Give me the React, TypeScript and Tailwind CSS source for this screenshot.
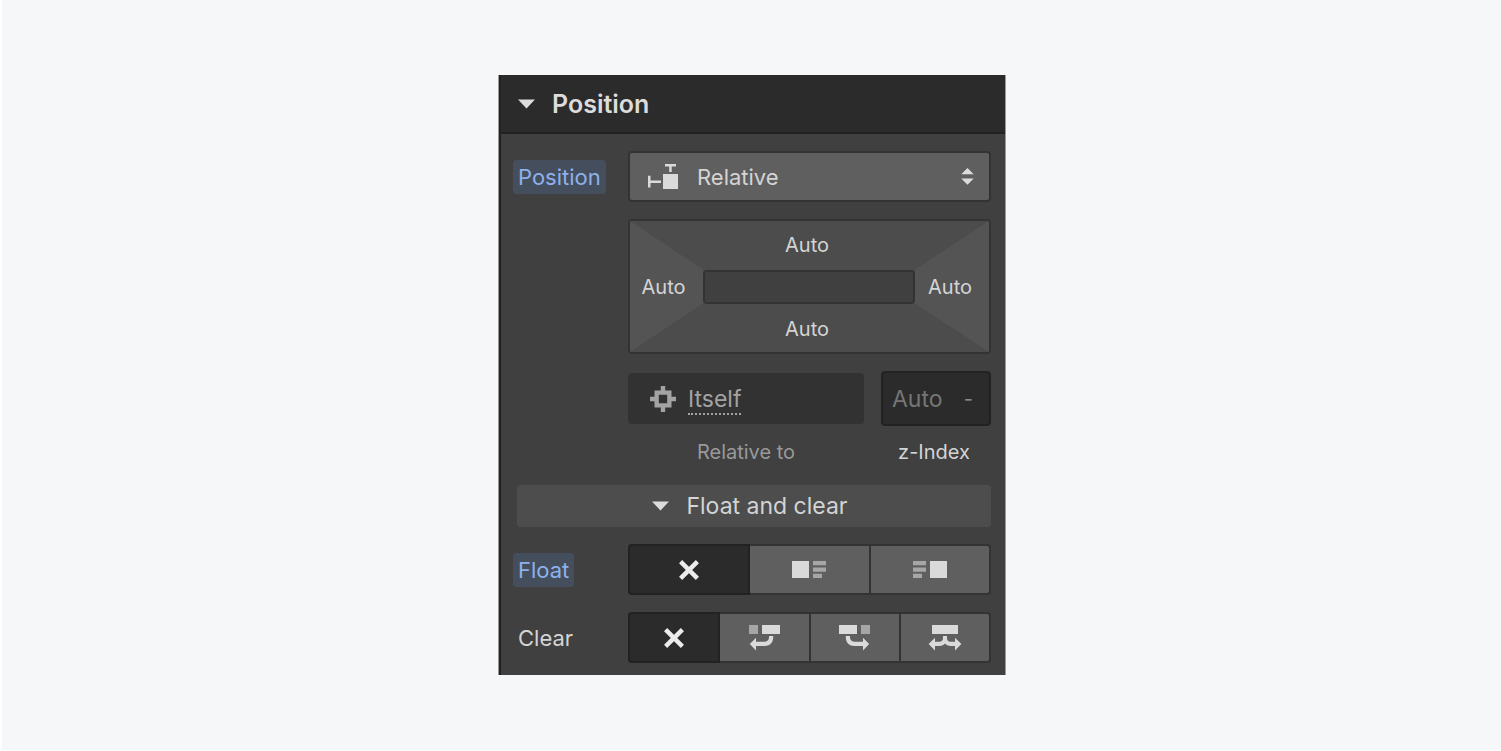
import React, { useState } from "react";

function Caret() {
  return (
    <svg width="17" height="10" viewBox="0 0 17 10" fill="#dcdcdc" aria-hidden="true">
      <path d="M0 .5h17L8.5 9.5z" />
    </svg>
  );
}

function CrossIcon() {
  return (
    <svg width="20" height="20" viewBox="0 0 20 20" fill="none" stroke="#ececec" strokeWidth="4.4" aria-hidden="true">
      <path d="M1.6 1.6 18.4 18.4M18.4 1.6 1.6 18.4" />
    </svg>
  );
}

function RelativeIcon() {
  return (
    <svg width="30" height="25" viewBox="0 0 30 25" fill="#dadada" aria-hidden="true">
      <path d="M0 11.7h2.5v4.8H13v2.4H2.5v4.5H0zM17 0h11v2.5h-4.3V8h-2.5V2.5H17zM15 10h15v15H15z" />
    </svg>
  );
}

function StepperIcon() {
  return (
    <svg width="13" height="17" viewBox="0 0 13 17" fill="#dcdcdc" aria-hidden="true">
      <path d="M.3 6.3 6.5 0l6.2 6.3zM.3 10.5h12.4L6.5 16.8z" />
    </svg>
  );
}

function TargetIcon() {
  return (
    <svg width="26" height="26" viewBox="0 0 26 26" fill="#a3a3a3" aria-hidden="true">
      <path
        fillRule="evenodd"
        d="M10.8 0h4.4v4.5h6.3v6.3H26v4.4h-4.5v6.3h-6.3V26h-4.4v-4.5H4.5v-6.3H0v-4.4h4.5V4.5h6.3zM8.8 8.8v8.4h8.4V8.8z"
      />
    </svg>
  );
}

function FloatIcon({ side }: { side: "left" | "right" }) {
  const left = side === "left";
  const x = left ? 21 : 0;
  return (
    <svg width="34" height="17" viewBox="0 0 34 17" aria-hidden="true">
      <rect x={left ? 0 : 17} width="17" height="17" fill="#dadada" />
      <path d={`M${x} 0h13v4.2h-13zM${x} 6.4h13v4.4h-13zM${x} 12.8h9V17h-9z`} fill="#a6a6a6" />
    </svg>
  );
}

function ClearLeftIcon() {
  return (
    <svg width="31" height="26" viewBox="0 0 31 26" fill="#dadada" aria-hidden="true">
      <path d="M0 0h9v9H0z" fill="#a6a6a6" />
      <path d="M13 0h18v9H13z" />
      <path d="M20 11h4.2v1.5c0 5-3.7 8.5-8.500 8.500H7v4.500L.8 19 7 12.800v3.900h8.200c2.900 0 4.800-1.700 4.800-4.500z" />
    </svg>
  );
}

function ClearRightIcon() {
  return (
    <svg width="31" height="26" viewBox="0 0 31 26" fill="#dadada" aria-hidden="true">
      <path d="M22 0h9v9h-9z" fill="#a6a6a6" />
      <path d="M0 0h18v9H0z" />
      <path d="M11 11H6.800v1.500c0 5 3.700 8.500 8.500 8.500H24v4.500l6.200-6.500L24 12.800v3.900h-8.200c-2.900 0-4.800-1.700-4.800-4.500z" />
    </svg>
  );
}

function ClearBothIcon() {
  return (
    <svg width="34" height="26" viewBox="0 0 34 26" fill="#dadada" aria-hidden="true">
      <path d="M4 0h26v9H4z" />
      <path d="M15 11h4v2.200c0 2.200 1.300 3.500 3.500 3.500H27v-3.900l6.400 6.200-6.400 6.500V21h-4.500c-2.400 0-4.200-.9-5.500-2.500C15.700 20.100 13.900 21 11.500 21H7v4.500L.6 19 7 12.800v3.900h4.500c2.200 0 3.500-1.300 3.500-3.500z" />
    </svg>
  );
}

type Option = { name: string; icon: React.ReactNode };

function Segmented({ id, options }: { id: string; options: Option[] }) {
  const [active, setActive] = useState(0);
  return (
    <div role="group" aria-labelledby={id} className="flex h-[51px] rounded bg-[#333333]">
      {options.map((o, i) => (
        <button
          key={o.name}
          type="button"
          aria-label={o.name}
          aria-pressed={i === active}
          onClick={() => setActive(i)}
          className={
            i === active
              ? "flex flex-1 items-center justify-center border-2 border-[#222222] bg-[#2b2b2b] first:rounded-l last:rounded-r"
              : "flex flex-1 items-center justify-center border-y-2 border-r-2 border-[#333333] bg-[#5f5f5f] first:rounded-l first:border-l-2 last:rounded-r"
          }
        >
          {o.icon}
        </button>
      ))}
    </div>
  );
}

const floatOptions: Option[] = [
  { name: "None", icon: <CrossIcon /> },
  { name: "Left", icon: <FloatIcon side="left" /> },
  { name: "Right", icon: <FloatIcon side="right" /> },
];

const clearOptions: Option[] = [
  { name: "None", icon: <CrossIcon /> },
  { name: "Left", icon: <ClearLeftIcon /> },
  { name: "Right", icon: <ClearRightIcon /> },
  { name: "Both", icon: <ClearBothIcon /> },
];

export default function App() {
  return (
    <main className="flex min-h-screen items-center justify-center border-b border-l-2 border-white bg-[#f6f7f9] pl-px font-['Inter',sans-serif] text-[22px] leading-6 text-[#d4d4d4]">
      <section className="w-full max-w-[508px] border-x border-[#9a9a9a] bg-[#404040]">
        <div className="border-l-2 border-[#222222]">
          <h2 className="border-b-2 border-[#222222] bg-[#2b2b2b] text-[25px] font-semibold text-[#dcdcdc]">
            <button type="button" className="flex h-[57px] w-full items-center gap-[17px] pl-[17px]">
              <Caret />
              Position
            </button>
          </h2>

          <div className="flex flex-col gap-[17px] pt-[17px] pr-[14px] pb-3 pl-3">
            <div className="grid grid-cols-[115px_1fr] items-center">
              <label htmlFor="position" className="justify-self-start rounded bg-[#454e5c] px-[5px] py-[5px] text-[#8db1ec]">
                Position
              </label>
              <div className="relative">
                <select
                  id="position"
                  defaultValue="Relative"
                  className="h-[51px] w-full appearance-none rounded border-2 border-[#333333] bg-[#5f5f5f] pl-[67px]"
                >
                  <option>Static</option>
                  <option>Relative</option>
                  <option>Absolute</option>
                  <option>Fixed</option>
                  <option>Sticky</option>
                </select>
                <span className="pointer-events-none absolute inset-y-0 left-5 flex items-center">
                  <RelativeIcon />
                </span>
                <span className="pointer-events-none absolute inset-y-0 right-[17px] flex items-center">
                  <StepperIcon />
                </span>
              </div>
            </div>

            <div className="ml-[115px] grid h-[135px] grid-cols-[73px_1fr_74px] grid-rows-[1fr_34px_1fr] rounded border-2 border-[#333333] bg-[#4c4c4c] text-xl">
              <button
                type="button"
                aria-label="Left offset"
                className="col-start-1 row-span-3 row-start-1 bg-[#545454] pr-1.5 [clip-path:polygon(0_0,100%_37%,100%_63%,0_100%)]"
              >
                Auto
              </button>
              <button type="button" aria-label="Top offset" className="col-start-2 row-start-1 pr-1">
                Auto
              </button>
              <div className="col-start-2 row-start-2 rounded border-2 border-[#333333] bg-[#404040]" />
              <button type="button" aria-label="Bottom offset" className="col-start-2 row-start-3 pt-0.5 pr-1">
                Auto
              </button>
              <button
                type="button"
                aria-label="Right offset"
                className="col-start-3 row-span-3 row-start-1 bg-[#545454] pr-1 [clip-path:polygon(0_37%,100%_0,100%_100%,0_63%)]"
              >
                Auto
              </button>
            </div>

            <div className="ml-[115px] grid grid-cols-[1fr_110px] items-center gap-x-[17px] gap-y-3 pb-0.5">
              <button
                id="relative-to"
                type="button"
                className="flex h-[51px] items-center gap-3 rounded bg-[#323232] pl-[22px] text-[23px] text-[#a3a3a3]"
              >
                <TargetIcon />
                <span className="mt-1 border-b-2 border-dotted border-[#a3a3a3] pb-0.5">Itself</span>
              </button>
              <div className="flex h-[55px] items-center justify-between rounded border-2 border-[#222222] bg-[#2b2b2b] pr-4 pl-[9px]">
                <input
                  id="z-index"
                  type="text"
                  placeholder="Auto"
                  className="w-16 min-w-0 bg-transparent text-[23px] outline-none placeholder:text-[#757575]"
                />
                <button type="button" aria-label="Unit" className="text-xl text-[#8a8a8a]">
                  -
                </button>
              </div>
              <label htmlFor="relative-to" className="text-center text-xl text-[#999999]">
                Relative to
              </label>
              <label htmlFor="z-index" className="pr-1 text-center text-xl">
                z-Index
              </label>
            </div>

            <button
              type="button"
              className="ml-1 flex h-[42px] items-center justify-center gap-[17px] rounded bg-[#4d4d4d] pr-2 text-[23px]"
            >
              <Caret />
              Float and clear
            </button>

            <div className="grid grid-cols-[115px_1fr] items-center">
              <span id="float" className="justify-self-start rounded bg-[#454e5c] px-[5px] py-[5px] text-[#8db1ec]">
                Float
              </span>
              <Segmented id="float" options={floatOptions} />
            </div>

            <div className="grid grid-cols-[115px_1fr] items-center">
              <span id="clear" className="px-[5px]">
                Clear
              </span>
              <Segmented id="clear" options={clearOptions} />
            </div>
          </div>
        </div>
      </section>
    </main>
  );
}
